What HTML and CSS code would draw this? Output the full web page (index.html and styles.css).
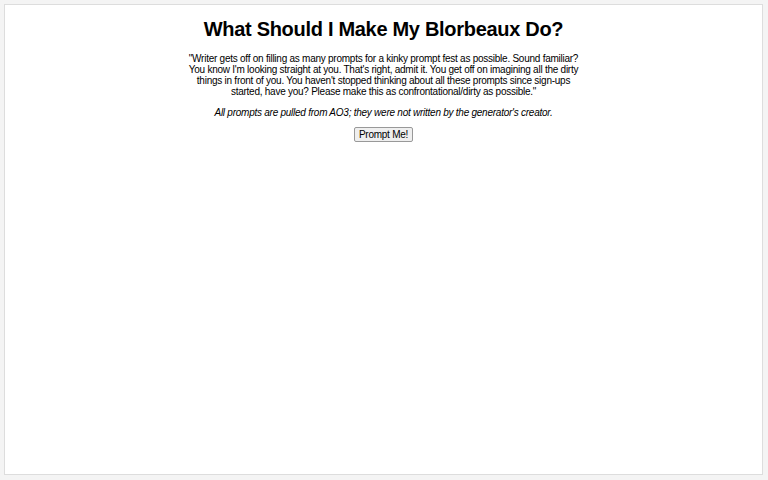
FILE: index.html
```html
<!DOCTYPE html>
<html lang="en">
<head>
    <meta charset="UTF-8">
    <meta name="viewport" content="width=device-width, initial-scale=1.0">
    <title>What Should I Make My Blorbeaux Do?</title>
    <link rel="stylesheet" href="styles.css">
</head>
<body>
    <div class="container">
        <h1 class="main-title">What Should I Make My Blorbeaux Do?</h1>
        <p class="prompt-text">"Writer gets off on filling as many prompts for a kinky prompt fest as possible. Sound familiar? You know I'm looking straight at you. That's right, admit it. You get off on imagining all the dirty things in front of you. You haven't stopped thinking about all these prompts since sign-ups started, have you? Please make this as confrontational/dirty as possible."</p>
        <p class="disclaimer">All prompts are pulled from AO3; they were not written by the generator's creator.</p>
        <button class="prompt-button">Prompt Me!</button>
    </div>
</body>
</html>
```

FILE: styles.css
```css
* {
    margin: 0;
    padding: 0;
    box-sizing: border-box;
}

html, body {
    height: 100%;
}

body {
    font-family: 'Liberation Sans', Arial, sans-serif;
    background: #f4f4f4;
    color: #000000;
    padding: 4px 5px 5px 4px;
}

.container {
    height: 100%;
    background: #ffffff;
    border: 1px solid #dddddd;
    text-align: center;
    padding-top: 12px;
}

.main-title {
    font-size: 20px;
    font-weight: bold;
    letter-spacing: -0.3px;
    line-height: 24px;
    margin-bottom: 12px;
}

.prompt-text {
    font-size: 10px;
    line-height: 11px;
    letter-spacing: -0.25px;
    max-width: 400px;
    margin: 0 auto 10px;
}

.disclaimer {
    font-size: 10px;
    font-style: italic;
    line-height: 11px;
    letter-spacing: -0.25px;
    margin-bottom: 6px;
}

.prompt-button {
    font-family: 'Liberation Sans', Arial, sans-serif;
    font-size: 10px;
    letter-spacing: -0.25px;
    padding: 1px 4px;
    background: #efefef;
    border: 1px solid #999999;
    border-radius: 2px;
    color: #000000;
}
```
